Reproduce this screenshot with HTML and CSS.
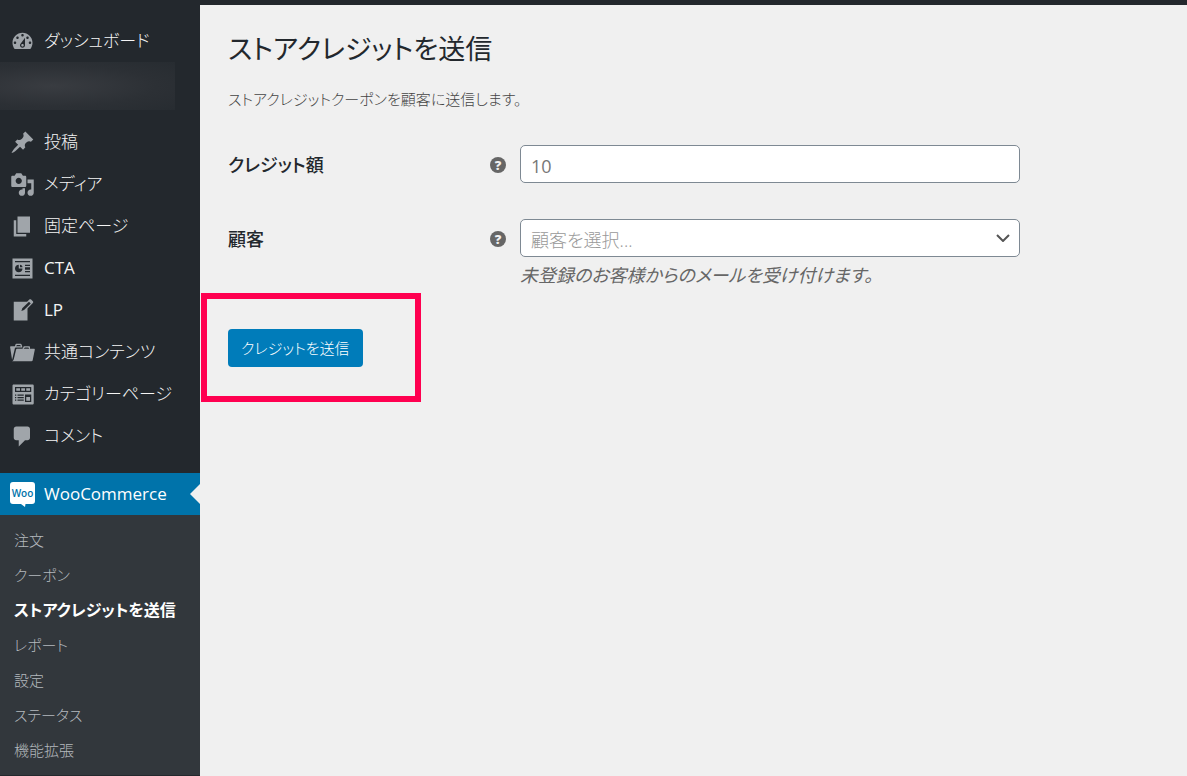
FILE: index.html
```html
<!DOCTYPE html>
<html lang="ja">

<head>
    <meta charset="utf-8">
    <meta name="viewport" content="width=device-width, initial-scale=1">
    <title>ストアクレジットを送信</title>
    <link rel="stylesheet" href="styles.css">
</head>

<body>
    <div class="adminBar"></div>
    <div class="wrap">
        <nav class="sidebar">
            <ul class="menu">
                <li>
                    <a class="menuItem" href="#">
                        <svg class="icon" viewBox="0 0 20 20"><path d="M3.76 16h12.48c1.1-1.37 1.76-3.11 1.76-5 0-4.42-3.58-8-8-8s-8 3.58-8 8c0 1.89.66 3.63 1.76 5zM10 4c.55 0 1 .45 1 1s-.45 1-1 1-1-.45-1-1 .45-1 1-1zM6 6c.55 0 1 .45 1 1s-.45 1-1 1-1-.45-1-1 .45-1 1-1zm8 0c.55 0 1 .45 1 1s-.45 1-1 1-1-.45-1-1 .45-1 1-1zm-5.37 5.55L12 7v6c0 1.1-.9 2-2 2s-2-.9-2-2c0-.57.24-1.08.63-1.45zM4 10c.55 0 1 .45 1 1s-.45 1-1 1-1-.45-1-1 .45-1 1-1zm12 0c.55 0 1 .45 1 1s-.45 1-1 1-1-.45-1-1 .45-1 1-1zm-5 3c0-.55-.45-1-1-1s-1 .45-1 1 .45 1 1 1 1-.45 1-1z"/></svg>
                        ダッシュボード
                    </a>
                </li>
                <li class="hiddenItem"></li>
                <li>
                    <a class="menuItem" href="#">
                        <svg class="icon" viewBox="0 0 20 20"><path d="M10.44 3.02l1.82-1.82 6.36 6.35-1.83 1.82c-1.05-.68-2.48-.57-3.41.36l-.75.75c-.92.93-1.04 2.35-.35 3.41l-1.83 1.82-2.41-2.41-2.8 2.79c-.42.42-3.38 2.71-3.8 2.29s1.86-3.39 2.28-3.81l2.79-2.79L4.1 9.36l1.83-1.82c1.05.69 2.48.57 3.4-.36l.75-.75c.93-.92 1.05-2.35.36-3.41z"/></svg>
                        投稿
                    </a>
                </li>
                <li>
                    <a class="menuItem" href="#">
                        <svg class="icon" viewBox="0 0 20 20"><path d="M13 11V4c0-.55-.45-1-1-1h-1.67L9 1H5L3.67 3H2c-.55 0-1 .45-1 1v7c0 .55.45 1 1 1h10c.55 0 1-.45 1-1zM7 4.5c1.38 0 2.5 1.12 2.5 2.5S8.38 9.5 7 9.5 4.5 8.38 4.5 7 5.62 4.5 7 4.5zM14 6h5v10.5c0 1.38-1.12 2.5-2.5 2.5S14 17.88 14 16.5s1.12-2.5 2.5-2.5c.17 0 .34.02.5.05V9h-3V6zm-4 8.05V13h2v3.5c0 1.38-1.12 2.5-2.5 2.5S7 17.88 7 16.5 8.12 14 9.5 14c.17 0 .34.02.5.05z"/></svg>
                        メディア
                    </a>
                </li>
                <li>
                    <a class="menuItem" href="#">
                        <svg class="icon" viewBox="0 0 20 20"><path d="M6 15V2h10v13H6zm-1 1h8v2H3V5h2v11z"/></svg>
                        固定ページ
                    </a>
                </li>
                <li>
                    <a class="menuItem latin" href="#">
                        <svg class="icon" viewBox="0 0 20 20"><path d="M18 18V2H2v16h16zM16 5H4V4h12v1zM7 7v3h3c0 1.66-1.34 3-3 3s-3-1.34-3-3 1.34-3 3-3zm1 2V7c1.1 0 2 .9 2 2H8zm8-1h-4V7h4v1zm0 3h-4V9h4v2zm0 2h-4v-1h4v1zm0 3H4v-1h12v1z"/></svg>
                        CTA
                    </a>
                </li>
                <li>
                    <a class="menuItem latin" href="#">
                        <svg class="icon" viewBox="0 0 20 20"><path d="M16.89 1.2l1.41 1.41c.39.39.39 1.02 0 1.41L14 8.33V18H3V3h10.67l1.8-1.8c.4-.39 1.03-.4 1.42 0zm-5.66 8.48l5.37-5.36-1.42-1.42-5.36 5.37-.71 2.12z"/></svg>
                        LP
                    </a>
                </li>
                <li>
                    <a class="menuItem" href="#">
                        <svg class="icon" viewBox="0 0 20 20"><path d="M4 5H.78c-.37 0-.74.32-.69.84l1.56 9.99S3.5 8.47 3.86 6.7c.11-.53.61-.7.98-.7H10s-.7-2.08-.77-2.31C9.11 3.25 8.89 3 8.45 3H5.14c-.36 0-.7.23-.8.64C4.25 4.04 4 5 4 5zm4.88 0h-4s.42-1 .87-1h2.13c.48 0 1 1 1 1zM2.67 16.25c-.31.47-.76.75-1.26.75h15.73c.54 0 .92-.31 1.03-.83.44-2.19 1.68-8.44 1.68-8.44.07-.5-.3-.73-.62-.73H16V5.53c0-.16-.26-.53-.66-.53h-3.76c-.52 0-.87.58-.87.58L10 7H5.59c-.32 0-.63.19-.69.5 0 0-1.59 6.7-1.72 7.33-.07.37-.22.99-.51 1.42zM15.38 7H11s.58-1 1.13-1h2.29c.71 0 .96 1 .96 1z"/></svg>
                        共通コンテンツ
                    </a>
                </li>
                <li>
                    <a class="menuItem" href="#">
                        <svg class="icon" viewBox="0 0 20 20"><path fill-rule="evenodd" d="M3 2h15c.55 0 1 .45 1 1v14c0 .55-.45 1-1 1H3c-.55 0-1-.45-1-1V3c0-.55.45-1 1-1zM4 4v4h13V4zm1 1h3v2H5zm4 0h3v2H9zm4 0h3v2h-3zM4 10h1v1H4zm2 0h5v1H6zm-2 2h1v1H4zm2 0h5v1H6zm-2 2h1v1H4zm2 0h5v1H6zm6-4h5v6h-5zm1 2v3h3v-3z"/></svg>
                        カテゴリーページ
                    </a>
                </li>
                <li>
                    <a class="menuItem" href="#">
                        <svg class="icon" viewBox="0 0 20 20"><path d="M5 2h9c1.1 0 2 .9 2 2v7c0 1.1-.9 2-2 2h-2l-5 5v-5H5c-1.1 0-2-.9-2-2V4c0-1.1.9-2 2-2z"/></svg>
                        コメント
                    </a>
                </li>
                <li class="current">
                    <a class="menuItem latin" href="#">
                        <svg class="icon" viewBox="0 0 25 25">
                            <path d="M3 0h19a3 3 0 0 1 3 3v16a3 3 0 0 1-3 3h-6.500l-.5 3-4-3H3a3 3 0 0 1-3-3V3a3 3 0 0 1 3-3z"/>
                            <text class="wooText" x="12.500" y="15" text-anchor="middle">Woo</text>
                        </svg>
                        WooCommerce
                    </a>
                    <ul class="submenu">
                        <li><a href="#">注文</a></li>
                        <li><a href="#">クーポン</a></li>
                        <li><a class="active" href="#">ストアクレジットを送信</a></li>
                        <li><a href="#">レポート</a></li>
                        <li><a href="#">設定</a></li>
                        <li><a href="#">ステータス</a></li>
                        <li><a href="#">機能拡張</a></li>
                    </ul>
                </li>
            </ul>
        </nav>

        <main class="content">
            <h1>ストアクレジットを送信</h1>
            <p class="intro">ストアクレジットクーポンを顧客に送信します。</p>

            <form>
                <div class="formRow">
                    <div class="formLabel">
                        <label for="amount">クレジット額</label>
                        <span class="helpTip">?</span>
                    </div>
                    <div class="formField">
                        <input type="text" id="amount" class="field" placeholder="10">
                    </div>
                </div>
                <div class="formRow">
                    <div class="formLabel">
                        <label for="customer">顧客</label>
                        <span class="helpTip">?</span>
                    </div>
                    <div class="formField">
                        <div class="selectBox">
                            <select id="customer" class="field">
                                <option>顧客を選択...</option>
                            </select>
                            <svg class="arrow" viewBox="0 0 14 8"><path d="M1 1l6 6 6-6"/></svg>
                        </div>
                        <p class="description">未登録のお客様からのメールを受け付けます。</p>
                    </div>
                </div>
                <div class="submit">
                    <button type="button" class="button">クレジットを送信</button>
                </div>
            </form>
        </main>
    </div>
</body>

</html>
```
FILE: styles.css
```css
* {
    box-sizing: border-box;
}

body {
    margin: 0;
    background: #f0f0f0;
    color: #444;
    font-family: "Open Sans", "Noto Sans CJK JP", sans-serif;
    font-size: 15px;
    line-height: 24px;
    font-feature-settings: "palt";
}

ul {
    list-style: none;
    margin: 0;
    padding: 0;
}

.adminBar {
    height: 5px;
    background: #23282d;
}

.wrap {
    display: flex;
    min-height: calc(100vh - 5px);
}

/* sidebar */

.sidebar {
    flex: 0 0 200px;
    background: #23282d;
}

.menu {
    padding-top: 15px;
}

.menuItem {
    display: flex;
    align-items: center;
    gap: 9px;
    height: 42px;
    padding-left: 10px;
    color: #f4f4f4;
    font-size: 17px;
    font-weight: 300;
    text-decoration: none;
    white-space: nowrap;
}

.latin {
    font-weight: 400;
}

.icon {
    flex: none;
    width: 25px;
    height: 25px;
    fill: #a0a5aa;
}

.hiddenItem {
    width: 175px;
    height: 48px;
    margin-bottom: 11px;
    background: radial-gradient(ellipse at 30% 50%, #393c41, #2c3035 60%, #272c31);
}

.current {
    margin-top: 16px;
}

.current .menuItem {
    position: relative;
    background: #0073aa;
    color: #fff;
}

.current .menuItem::after {
    content: "";
    position: absolute;
    right: 0;
    top: 11px;
    border: 10px solid transparent;
    border-left: 0;
    border-right-color: #f0f0f0;
}

.current .icon {
    fill: #fff;
}

.current .wooText {
    fill: #0073aa;
    font-family: "Open Sans", sans-serif;
    font-size: 10px;
    font-weight: 600;
}

.submenu {
    padding: 8px 0 7px;
    background: #32373c;
}

.submenu a {
    display: block;
    padding-left: 14px;
    color: #b4b9be;
    font-weight: 300;
    line-height: 35px;
    text-decoration: none;
    white-space: nowrap;
}

.submenu .active {
    color: #fff;
    font-size: 16px;
    font-weight: 700;
}

/* page */

.content {
    flex: 1;
    min-width: 0;
    padding: 24px 28px;
}

h1 {
    margin: 0;
    color: #23282d;
    font-size: 27px;
    font-weight: 400;
    line-height: 40px;
}

.intro {
    margin: 18px 0 34px;
    font-weight: 300;
}

.formRow {
    display: grid;
    grid-template-columns: 278px minmax(0, 500px);
    gap: 14px;
    margin-bottom: 36px;
}

.formLabel {
    display: flex;
    align-items: center;
    justify-content: space-between;
    height: 40px;
    margin-bottom: -2px;
    color: #23282d;
    font-size: 18px;
    font-weight: 500;
}

.helpTip {
    width: 16px;
    height: 16px;
    border-radius: 50%;
    background: #666;
    color: #f0f0f0;
    font-size: 13px;
    font-weight: 800;
    line-height: 16px;
    text-align: center;
}

.field {
    display: block;
    width: 100%;
    height: 38px;
    padding: 3px 10px 0;
    border: 1px solid #7e8993;
    border-radius: 5px;
    background: #fff;
    color: #999;
    font: inherit;
    font-size: 18px;
    font-weight: 300;
    font-feature-settings: inherit;
    appearance: none;
}

.field::placeholder {
    color: #777;
    font-weight: 400;
}

.selectBox {
    position: relative;
}

.arrow {
    position: absolute;
    right: 10px;
    top: 15px;
    width: 14px;
    height: 8px;
    fill: none;
    stroke: #555;
    stroke-width: 2;
    pointer-events: none;
}

.description {
    margin: 6px 0 0;
    color: #666;
    font-size: 18px;
    font-style: italic;
}

.submit {
    position: relative;
    width: fit-content;
    margin-top: 42px;
}

/* red frame around the submit button */
.submit::after {
    content: "";
    position: absolute;
    inset: -36px -58px -35px -27px;
    border: 6px solid #ff0050;
    pointer-events: none;
}

.button {
    display: block;
    height: 38px;
    padding: 0 13px;
    border: 0;
    border-radius: 4px;
    background: #007cba;
    color: #fff;
    font: inherit;
    font-weight: 300;
    font-feature-settings: inherit;
}
```
